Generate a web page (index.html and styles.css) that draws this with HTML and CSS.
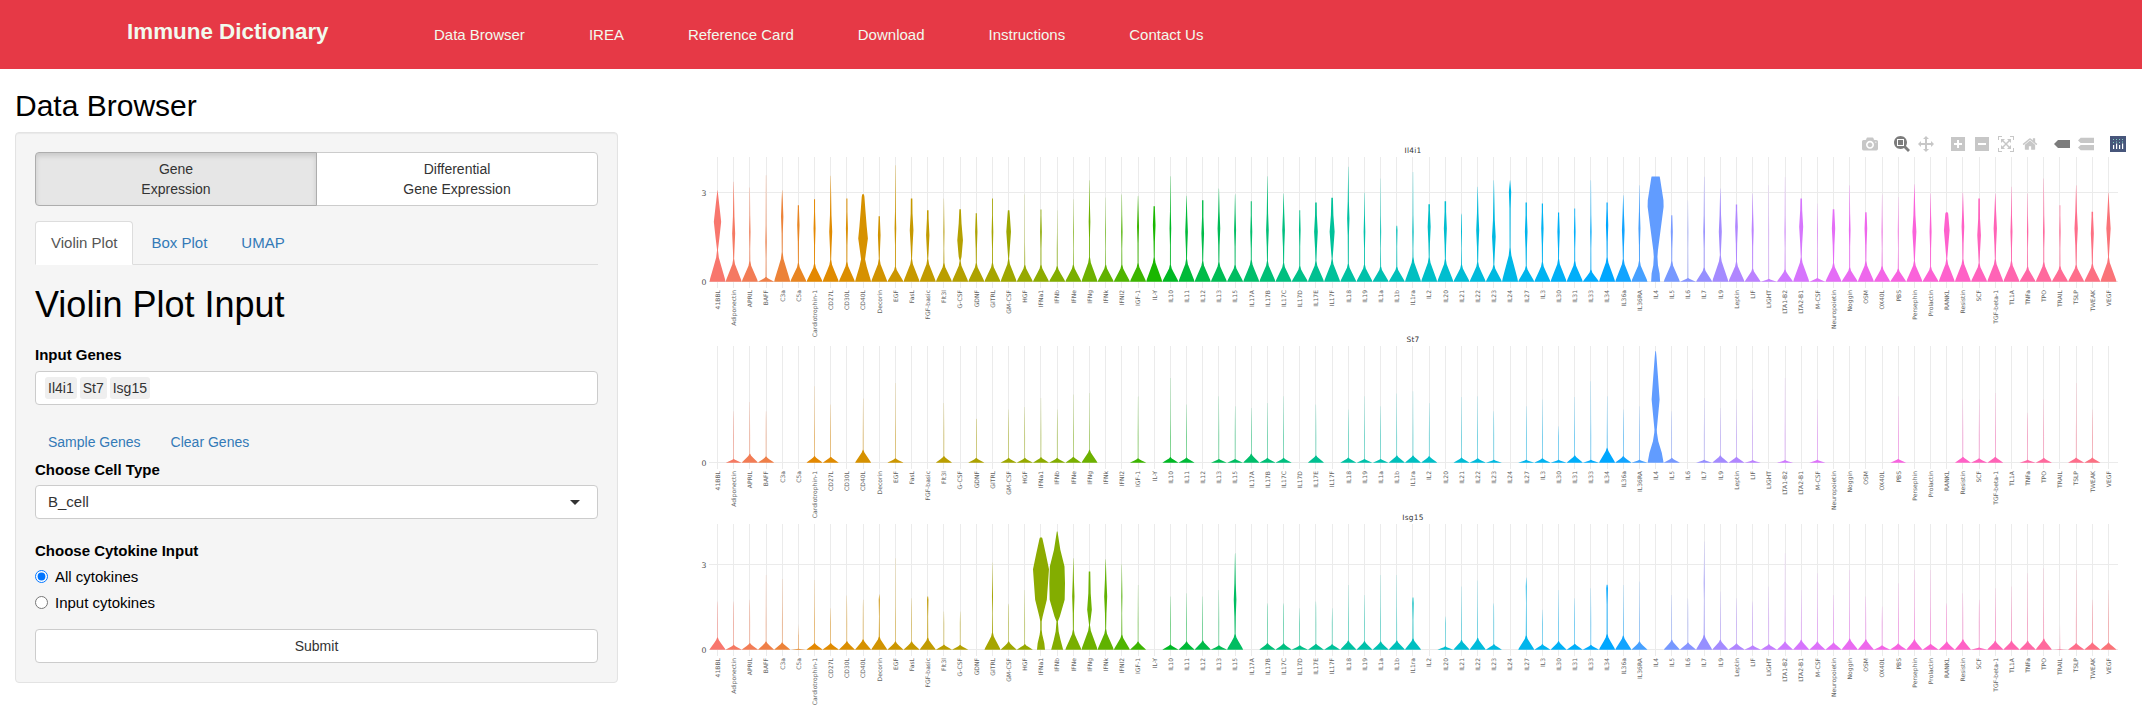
FILE: index.html
```html
<!DOCTYPE html>
<html lang="en">
<head>
<meta charset="utf-8">
<title>Immune Dictionary</title>
<link rel="stylesheet" href="styles.css">
</head>
<body>
<header class="navbar">
  <a class="brand">Immune Dictionary</a>
  <nav class="nav-links"><a>Data Browser</a><a>IREA</a><a>Reference Card</a><a>Download</a><a>Instructions</a><a>Contact Us</a></nav>
</header>
<div class="page">
  <section class="side">
    <h2 class="page-title">Data Browser</h2>
    <form class="well">
      <div class="btn-group">
        <button type="button" class="btn toggle active">Gene<br>Expression</button>
        <button type="button" class="btn toggle">Differential<br>Gene Expression</button>
      </div>
      <div class="tabs"><a class="tab current">Violin Plot</a><a class="tab">Box Plot</a><a class="tab">UMAP</a></div>
      <h1 class="form-title">Violin Plot Input</h1>
      <label class="label">Input Genes</label>
      <div class="field tags"><span class="tag">Il4i1</span><span class="tag">St7</span><span class="tag">Isg15</span></div>
      <div class="gene-links"><a>Sample Genes</a><a>Clear Genes</a></div>
      <label class="label">Choose Cell Type</label>
      <div class="field select"><span>B_cell</span><i class="caret"></i></div>
      <label class="label cytokine">Choose Cytokine Input</label>
      <label class="radio"><input type="radio" name="cyt" checked>All cytokines</label>
      <label class="radio"><input type="radio" name="cyt">Input cytokines</label>
      <button type="button" class="btn submit">Submit</button>
    </form>
  </section>
  <main class="plot">
    <svg id="chart" class="chart" width="1502" height="658" viewBox="640 69 1502 658"></svg>
    <div class="modebar">
      <div class="group"><svg viewBox="0 0 1000 1000"><path transform="matrix(1 0 0 -1 0 850)" d="m500 450c-83 0-150-67-150-150 0-83 67-150 150-150 83 0 150 67 150 150 0 83-67 150-150 150z m400 150h-120c-16 0-34 13-39 29l-31 93c-6 15-23 28-40 28h-340c-16 0-34-13-39-28l-31-94c-6-15-23-28-40-28h-120c-55 0-100-45-100-100v-450c0-55 45-100 100-100h800c55 0 100 45 100 100v450c0 55-45 100-100 100z m-400-550c-138 0-250 112-250 250 0 138 112 250 250 250 138 0 250-112 250-250 0-138-112-250-250-250z m365 380c-19 0-35 16-35 35 0 19 16 35 35 35 19 0 35-16 35-35 0-19-16-35-35-35z"/></svg></div>
      <div class="group"><svg class="on" viewBox="0 0 1000 1000"><path transform="matrix(1 0 0 -1 0 850)" d="m1000-25l-250 251c40 63 63 138 63 218 0 224-182 406-407 406-224 0-406-182-406-406s183-406 407-406c80 0 155 22 218 62l250-250 125 125z m-812 250l0 438 437 0 0-438-437 0z m62 375l313 0 0-312-313 0 0 312z"/></svg><svg viewBox="0 0 1000 1000"><path transform="matrix(1 0 0 -1 0 850)" d="m1000 350l-187 188 0-125-250 0 0 250 125 0-188 187-187-187 125 0 0-250-250 0 0 125-188-188 186-187 0 125 252 0 0-250-125 0 187-188 188 188-125 0 0 250 250 0 0-126 187 188z"/></svg></div>
      <div class="group"><svg viewBox="0 0 875 1000"><path transform="matrix(1 0 0 -1 0 850)" d="m1 787l0-875 875 0 0 875-875 0z m687-500l-187 0 0-187-125 0 0 187-188 0 0 125 188 0 0 187 125 0 0-187 187 0 0-125z"/></svg><svg viewBox="0 0 875 1000"><path transform="matrix(1 0 0 -1 0 850)" d="m0 788l0-876 875 0 0 876-875 0z m688-500l-500 0 0 125 500 0 0-125z"/></svg><svg viewBox="0 0 1000 1000"><path transform="matrix(1 0 0 -1 0 850)" d="m250 850l-187 0-63 0 0-62 0-188 63 0 0 188 187 0 0 62z m688 0l-188 0 0-62 188 0 0-188 62 0 0 188 0 62-62 0z m-875-938l0 188-63 0 0-188 0-62 63 0 187 0 0 62-187 0z m875 188l0-188-188 0 0-62 188 0 62 0 0 62 0 188-62 0z m-125 188l-1 0-93-94-156 156 156 156 92-93 2 0 0 250-250 0 0-2 93-92-156-156-156 156 94 92 0 2-250 0 0-250 0 0 93 93 157-156-157-156-93 94 0 0 0-250 250 0 0 0-94 93 156 157 156-157-93-93 0 0 250 0 0 250z"/></svg><svg viewBox="0 0 928.6 1000"><path transform="matrix(1 0 0 -1 0 850)" d="m786 296v-267q0-15-11-26t-25-10h-214v214h-143v-214h-214q-15 0-25 10t-11 26v267q0 1 0 2t0 2l321 264 321-264q1-1 1-4z m124 39l-34-41q-5-5-12-6h-2q-7 0-12 3l-386 322-386-322q-7-4-13-4-7 2-12 7l-35 41q-4 5-3 13t6 12l401 334q18 15 42 15t43-15l136-114v109q0 8 5 13t13 5h107q8 0 13-5t5-13v-227l122-102q5-5 6-12t-4-13z"/></svg></div>
      <div class="group"><svg class="on" viewBox="0 0 1500 1000"><path transform="matrix(1 0 0 -1 0 850)" d="m375 725l0 0-375-375 375-374 0-1 1125 0 0 750-1125 0z"/></svg><svg viewBox="0 0 1125 1000"><path transform="matrix(1 0 0 -1 0 850)" d="m187 786l0 2-187-188 188-187 0 0 937 0 0 373-938 0z m0-499l0 1-187-188 188-188 0 0 937 0 0 376-938-1z"/></svg></div>
      <div class="group"><svg class="logo" viewBox="0 0 16 16"><path class="logo-bg" d="M0 0h16v16H0z"/><path class="logo-dots" d="M3 3h1v1H3zM6 3h1v1H6zM9 3h1v1H9zM12 3h1v1H12zM3 6h1v1H3zM9 6h1v1H9zM6 5.500h1v1H6zM12 5.500h1v1H12z"/><path class="logo-bars" d="M3 9h1.200v4H3zM6 7.500h1.200v5.500H6zM9 9h1.200v4H9zM12 7.500h1.200v5.500H12z"/></svg></div>
    </div>
  </main>
</div>
<script src="chart.js"></script>
</body>
</html>
```
FILE: styles.css
```css
* { box-sizing: border-box; }
body { margin: 0; background: #fff; color: #000; font: 15px/1.42857 "Liberation Sans", Arial, sans-serif; overflow: hidden; }
.navbar { display: flex; align-items: center; height: 69px; padding-left: 127px; background: #e63946; color: #f1faee; }
.brand { width: 307px; font-size: 22.4px; font-weight: 700; line-height: 30px; padding-bottom: 5px; }
.nav-links { display: flex; gap: 64px; }
.page { display: flex; height: 658px; }
.side { width: 640px; padding: 0 22px 0 15px; }
.page-title { margin: 20px 0 10px; font-size: 30px; font-weight: 400; line-height: 33px; }
.well { width: 603px; height: 551px; padding: 19px; border: 1px solid #e3e3e3; border-radius: 4px; background: #f5f5f5; box-shadow: inset 0 1px 1px rgba(0,0,0,.05); }
.btn { border: 1px solid #ccc; border-radius: 4px; background: #fff; color: #333; font: 14px/20px "Liberation Sans", Arial, sans-serif; padding: 6px 12px; }
.btn-group { display: flex; }
.toggle { flex: 1; height: 54px; }
.toggle:first-child { border-radius: 4px 0 0 4px; }
.toggle:last-child { margin-left: -1px; border-radius: 0 4px 4px 0; }
.toggle.active { position: relative; background: #e6e6e6; border-color: #adadad; box-shadow: inset 0 3px 5px rgba(0,0,0,.125); }
.tabs { display: flex; gap: 2px; margin-top: 15px; height: 44px; border-bottom: 1px solid #ddd; }
.tab { height: 44px; padding: 10px 15px; border: 1px solid transparent; border-radius: 4px 4px 0 0; color: #337ab7; }
.tab.current { background: #fff; border-color: #ddd #ddd transparent; color: #555; }
.form-title { margin: 20px 0 0; font-size: 36px; font-weight: 400; line-height: 40px; }
.label { display: block; margin-top: 19px; font-weight: 700; line-height: 21px; }
.field { display: flex; align-items: center; height: 34px; margin-top: 6px; border: 1px solid #ccc; border-radius: 4px; background: #fff; color: #333; }
.tags { gap: 3px; padding-left: 9px; font-size: 14px; }
.tag { padding: 0 3px; height: 22px; line-height: 22px; border-radius: 3px; background: #efefef; }
.gene-links { display: flex; gap: 30px; padding: 27px 13px 0; color: #337ab7; font-size: 14px; line-height: 20px; }
.gene-links + .label { margin-top: 7px; }
.select { margin-top: 5px; justify-content: space-between; padding: 0 17px 0 12px; }
.caret { border: 5px solid transparent; border-top-color: #333; border-bottom: 0; }
.label.cytokine { margin-top: 21px; }
.radio { display: flex; align-items: center; gap: 7px; height: 21px; margin-top: 5px; }
.radio input { width: 13px; height: 13px; margin: 0; accent-color: #0075ff; }
.submit { width: 100%; height: 34px; margin-top: 16px; }
.plot { position: relative; width: 1502px; }
.chart { display: block; }
.modebar { position: absolute; top: 67px; right: 12px; display: flex; gap: 8px; }
.group { display: flex; }
.group svg { width: 24px; height: 16px; padding: 0 4px; fill: rgba(68,68,68,.3); }
.group svg.on { fill: rgba(68,68,68,.7); }
.logo .logo-bg { fill: #47567b; }
.logo .logo-dots { fill: #80cfbe; }
.logo .logo-bars { fill: #fff; }
.grid { stroke: #ebebeb; stroke-width: 1; shape-rendering: crispEdges; }
.tick { fill: #626262; font: 6.050px "DejaVu Sans", sans-serif; text-anchor: end; }
.value { fill: #4d4d4d; font: 7.8px "DejaVu Sans", sans-serif; text-anchor: end; }
.facet { fill: #333; font: 7.4px "DejaVu Sans", sans-serif; letter-spacing: .25px; text-anchor: middle; }
```
FILE: chart.js
```js
const names = '41BBL Adiponectin APRIL BAFF C3a C5a Cardiotrophin-1 CD27L CD30L CD40L Decorin EGF FasL FGF-basic Flt3l G-CSF GDNF GITRL GM-CSF HGF IFNa1 IFNb IFNe IFNg IFNk IFNl2 IGF-1 IL-Y IL10 IL11 IL12 IL13 IL15 IL17A IL17B IL17C IL17D IL17E IL17F IL18 IL19 IL1a IL1b IL1ra IL2 IL20 IL21 IL22 IL23 IL24 IL27 IL3 IL30 IL31 IL33 IL34 IL36a IL36RA IL4 IL5 IL6 IL7 IL9 Leptin LIF LIGHT LTA1-B2 LTA2-B1 M-CSF Neuropoietin Noggin OSM OX40L PBS Persephin Prolactin RANKL Resistin SCF TGF-beta-1 TL1A TNFa TPO TRAIL TSLP TWEAK VEGF'.split(' ');

// Each entry is "foot,top,bulge width,bulge height" in thirds of a pixel; "-" is an empty violin.
const facets = [
  { title: 'Il4i1', titleY: 153, top: 157, base: 281.5, three: 192.5, data: '83,275,22,180 60,300,9,145 55,283,4,150 13,320,4,120 78,275,7,195 50,230,7,170 48,248,6,160 58,318,9,150 53,250,6,160 68,263,29,130 60,197,8,140 40,350,5,160 60,250,11,155 60,215,10,140 50,250,3,150 55,218,17,125 50,206,7,150 50,250,5,150 60,215,14,150 45,262,2,70 45,217,5,150 42,215,2,100 45,248,2,150 65,305,5,180 45,253,2,150 45,262,4,150 50,258,6,165 65,227,8,170 45,317,5,160 60,258,8,150 55,245,8,145 52,280,8,160 45,263,6,155 58,242,6,150 55,317,8,155 50,265,8,155 42,215,5,155 55,238,11,150 60,252,15,150 48,345,7,190 45,268,5,150 40,310,3,150 40,168,4,155 65,330,4,150 65,233,9,165 60,242,9,160 45,205,3,150 52,285,9,155 45,305,11,135 90,305,7,270 42,238,8,150 52,235,7,160 60,208,7,150 55,220,5,150 32,305,4,150 65,238,7,170 60,260,8,155 55,290,6,160 - 55,200,6,150 10,245,2,150 38,315,5,150 70,280,9,150 53,232,8,165 35,265,6,155 8,290,1.5,150 33,315,3,150 65,250,12,165 10,235,2,150 50,218,10,160 38,290,5,155 55,209,8,160 42,262,3,150 35,255,2.5,150 55,293,12,150 40,265,6,150 60,209,17,155 60,268,8,165 50,250,11,140 60,265,10,160 55,285,6,150 40,265,4,150 52,310,5,150 42,230,4,150 45,290,10,160 48,210,9,145 65,268,13,160',
    shapes: { 9: [[0,48],[10,43],[45,22],[68,12],[90,18],[130,29],[165,22],[215,14],[255,8],[263,5]], 58: [[0,27],[25,24],[50,14],[75,11],[95,14],[160,31],[225,48],[245,47],[280,36],[312,26],[316,24]] } },
  { title: 'St7', titleY: 342, top: 346, base: 462.5, data: '- 10,155 24,183 17,155 - - 18,230 16,175 - 35,193 - 12,240 - - 18,180 - 13,132 - 13,160 13,168 15,195 13,160 16,205 35,210 - - 12,200 - 15,255 14,175 - 10,200 10,170 24,165 13,180 13,200 - 20,175 - 14,160 10,200 10,170 20,208 20,215 18,180 - 14,198 12,200 8,155 - 8,170 12,190 8,110 20,198 8,245 40,200 18,160 8,170 - 13,155 - 8,195 20,165 16,190 7,220 - 7,255 - 8,190 - - - - 10,200 - - - 16,190 12,190 16,210 - 8,150 13,190 - 14,240 14,160 -',
    shapes: { 58: [[0,48],[30,37],[65,16],[90,8],[100,7],[190,24],[260,14],[320,5],[335,2]] } },
  { title: 'Isg15', titleY: 520, top: 524, base: 649.5, three: 564.5, data: '33,145 13,145 18,150 22,225 20,213 3,45 18,210 18,125 23,163 28,150 35,167,3,150 22,275 22,155 32,160,4,150 14,115 13,115 - 45,262,3,160 22,138 15,180 - - 53,275,7,160 65,235,14,120 55,272,9,160 40,258,3,160 22,195 - 14,160 22,170 25,160 12,180 42,290,8,150 - 18,140 17,140 12,125 16,145 15,125 25,195 23,165 22,225 25,225 30,157,4,140 - 9,100 26,190 32,208 15,140 - 38,217,2.5,190 15,120 23,180 16,155 13,185 42,195,5,185 38,195 22,205 - 27,165 20,155 40,325,2.5,200 27,175 17,155 12,145 15,190 22,290 27,180 22,230 20,165 30,240 28,160 12,130 17,200 28,240 16,240 22,140 28,170 6,150 24,185 24,190 24,230 30,245 2,10 18,240 20,150 20,180',
    shapes: { 20: [[0,24],[20,20],[45,8],[60,4],[85,4],[100,10],[150,35],[220,45],[242,48],[290,28],[333,9],[337,6]], 21: [[0,36],[30,20],[55,9],[85,4],[100,16],[150,45],[200,47],[250,44],[300,19],[345,5],[355,2]] } }
];

// Evenly spaced hues at chroma 100, luminance 65.
function hcl(h) {
  const L = 65, r = h * Math.PI / 180, Y = Math.pow((L + 16) / 116, 3);
  const u = 100 * Math.cos(r) / (13 * L) + 0.19784, v = 100 * Math.sin(r) / (13 * L) + 0.46834;
  const X = 9 * Y * u / (4 * v), Z = Y * (12 - 3 * u - 20 * v) / (4 * v);
  const g = [3.2406 * X - 1.5372 * Y - 0.4986 * Z, -0.9689 * X + 1.8758 * Y + 0.0415 * Z, 0.0557 * X - 0.204 * Y + 1.057 * Z];
  return 'rgb(' + g.map(c => Math.round(255 * Math.min(1, Math.max(0, c <= 0.0031308 ? 12.92 * c : 1.055 * Math.pow(c, 1 / 2.4) - 0.055)))).join(',') + ')';
}
function outline(x, base, pts) {
  const at = (p, s) => (x + s * p[1] / 6).toFixed(2) + ' ' + (base - p[0] / 3).toFixed(2);
  return 'M' + pts.map(p => at(p, -1)).concat(pts.slice().reverse().map(p => at(p, 1))).join('L') + 'Z';
}
function profile(spec) {
  const [foot, top, bw = 1.4, bh = 80] = spec.split(',').map(Number);
  const tip = bw < 4 ? 0.35 : (top < 255 ? Math.min(bw / 2, 4.5) : 0.6);
  const neck = Math.min(2.6, bw);
  const pts = [[0, 48], [foot * 0.12, 44], [foot * 0.6, 21], [foot * 0.88, 8], [foot * 1.15, neck]];
  if (bh - 50 > foot * 1.2) pts.push([bh - 50, Math.max(1.3, bw * 0.5)]);
  if (bh > foot * 1.3) pts.push([bh, bw]);
  if (bh + 50 < top) pts.push([bh + 50, Math.max(0.9, bw * 0.5)]);
  pts.push([top, tip]);
  return pts;
}
const x0 = 717.5, step = 16.1744;
let out = '';
for (const f of facets) {
  const specs = f.data.split(' ');
  for (const y of [f.base, f.three]) if (y) {
    out += `<path class="grid" d="M709 ${y}H2118"/><text class="value" x="706.5" y="${y + 3}">${y === f.base ? 0 : 3}</text>`;
  }
  names.forEach((n, i) => {
    const gx = Math.floor(x0 + step * i) + 0.5;
    out += `<path class="grid" d="M${gx} ${f.top}V${f.base + 6}"/>`;
  });
  names.forEach((n, i) => {
    const x = x0 + step * i, color = hcl(15 + 360 * i / names.length);
    const pts = f.shapes && f.shapes[i] || (specs[i] !== '-' && profile(specs[i]));
    if (pts) out += `<path fill="${color}" d="${outline(x, f.base + 0.3, pts)}"/>`;
    out += `<text class="tick" transform="translate(${(x + 2.3).toFixed(2)} ${f.base + 8.5}) rotate(-90)">${n}</text>`;
  });
  out += `<text class="facet" x="1413" y="${f.titleY}">${f.title}</text>`;
}
document.getElementById('chart').innerHTML = out;
```
